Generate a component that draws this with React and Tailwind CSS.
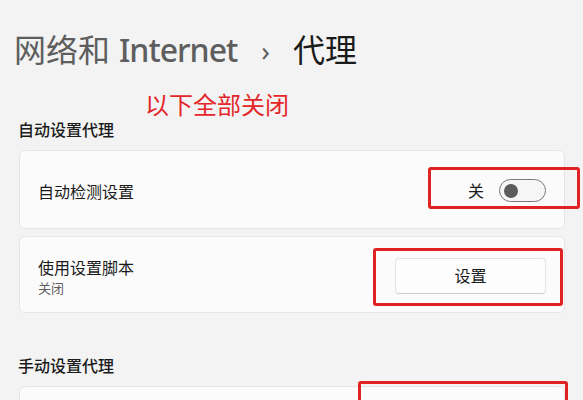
import React from "react";

const font = { fontFamily: '"Noto Sans", "Noto Sans CJK SC", sans-serif' };

function Card({ className = "", children }) {
    return (
        <div
            className={
                "flex items-center justify-between rounded-[6px] border border-[#e6e6e6] bg-[#fbfbfb] pl-[18px] pr-[18px] " +
                className
            }
        >
            {children}
        </div>
    );
}

function Toggle() {
    return (
        <div className="flex h-[23px] w-[47px] items-center rounded-full border border-[#7a7a7a] bg-[#f6f6f6] pl-[4px]">
            <div className="h-[14px] w-[14px] rounded-full bg-[#5c5c5c]" />
        </div>
    );
}

export default function App() {
    return (
        <div
            className="relative h-[400px] w-[583px] overflow-hidden bg-[#f3f3f3] text-[#1b1b1b]"
            style={font}
        >
            {/* Title */}
            <div className="flex items-center pl-[14px] pt-[30px] text-[32px] leading-[40px]">
                <span className="text-[#5e5e5e]">网络和</span>
                <span className="ml-[9px] font-medium tracking-[-1px] text-[#5e5e5e]">Internet</span>
                <span className="ml-[24px] mr-[23px] text-[28px] text-[#5e5e5e]">›</span>
                <span className="text-[#1b1b1b]">代理</span>
            </div>

            <div className="ml-[19px] w-[546px]">
                {/* Auto section */}
                <div className="mt-[49px] text-[16px] font-medium leading-[22px] -ml-[1px]">
                    自动设置代理
                </div>

                <Card className="mt-[9px] h-[79px]">
                    <span className="pt-[4px] text-[16px] leading-[22px]">自动检测设置</span>
                    <div className="flex items-center gap-[15px] pt-[2px]">
                        <span className="text-[16px] leading-[22px]">关</span>
                        <Toggle />
                    </div>
                </Card>

                <Card className="mt-[7px] h-[77px]">
                    <div className="flex flex-col pt-[5px]">
                        <span className="text-[16px] leading-[21px]">使用设置脚本</span>
                        <span className="text-[13px] leading-[18px] text-[#606060]">关闭</span>
                    </div>
                    <button className="mt-[3px] h-[36px] w-[151px] rounded-[4px] border border-[#e3e3e3] border-b-[#cfcfcf] bg-[#fdfdfd] text-[16px] text-[#1b1b1b]">
                        设置
                    </button>
                </Card>

                {/* Manual section */}
                <div className="mt-[42px] text-[16px] font-medium leading-[22px] -ml-[1px]">
                    手动设置代理
                </div>

                <Card className="mt-[9px] h-[80px]" />
            </div>

            {/* Annotations */}
            <div className="absolute left-[145px] top-[91px] text-[24px] leading-[28px] text-[#e3262a]">
                以下全部关闭
            </div>
            <div className="absolute left-[428px] top-[167px] h-[42px] w-[152px] rounded-[3px] border-[3px] border-[#e02222]" />
            <div className="absolute left-[373px] top-[248px] h-[58px] w-[190px] rounded-[3px] border-[3px] border-[#e02222]" />
            <div className="absolute left-[358px] top-[381px] h-[40px] w-[210px] rounded-[3px] border-[3px] border-[#e02222]" />
        </div>
    );
}
